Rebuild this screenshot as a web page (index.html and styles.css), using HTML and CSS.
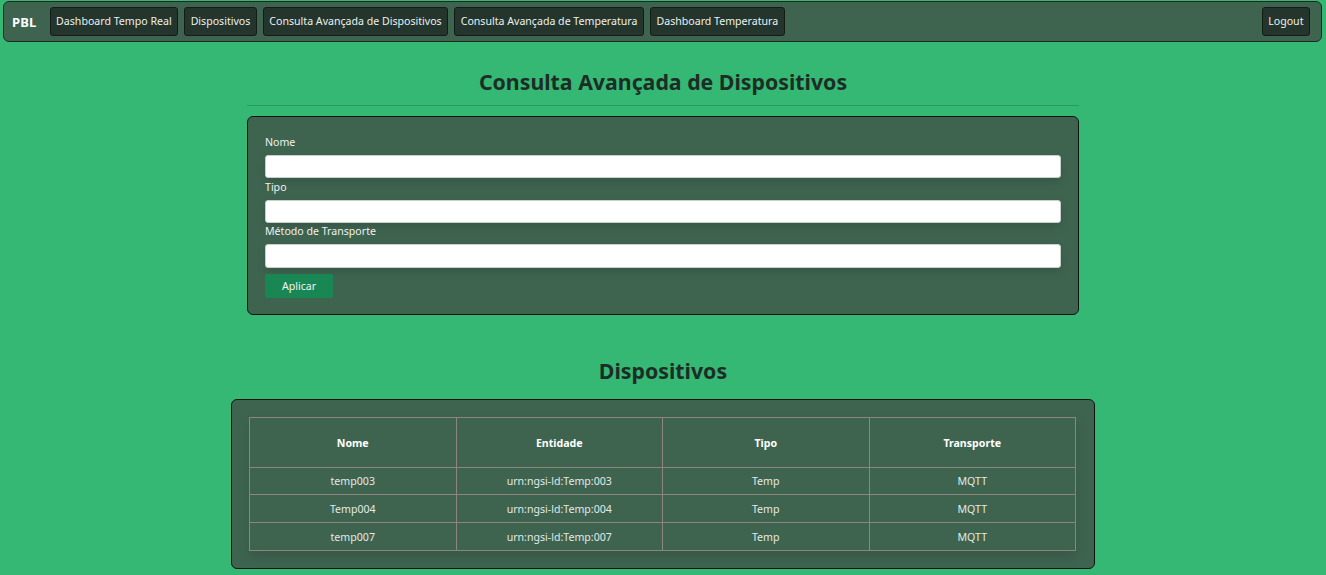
FILE: index.html
```html
<!DOCTYPE html>
<html lang="pt">
<head>
<meta charset="utf-8">
<title>Consulta Avançada de Dispositivos</title>
<link rel="stylesheet" href="styles.css">
</head>
<body>
<nav class="navbar">
  <span class="brand">PBL</span>
  <div class="nav-links">
    <a class="nav-btn" href="#">Dashboard Tempo Real</a>
    <a class="nav-btn" href="#">Dispositivos</a>
    <a class="nav-btn" href="#">Consulta Avançada de Dispositivos</a>
    <a class="nav-btn" href="#">Consulta Avançada de Temperatura</a>
    <a class="nav-btn" href="#">Dashboard Temperatura</a>
  </div>
  <a class="nav-btn logout" href="#">Logout</a>
</nav>

<main class="page">
  <section class="query">
    <h1 class="title">Consulta Avançada de Dispositivos</h1>
    <hr class="divider">
    <form class="card form-card">
      <label class="field-label" for="nome">Nome</label>
      <input class="field-input" id="nome" type="text">
      <label class="field-label" for="tipo">Tipo</label>
      <input class="field-input" id="tipo" type="text">
      <label class="field-label" for="transp">Método de Transporte</label>
      <input class="field-input" id="transp" type="text">
      <button class="apply-btn" type="button">Aplicar</button>
    </form>
  </section>

  <section class="results">
    <h2 class="subtitle">Dispositivos</h2>
    <div class="card table-card">
      <table class="devices">
        <thead>
          <tr><th>Nome</th><th>Entidade</th><th>Tipo</th><th>Transporte</th></tr>
        </thead>
        <tbody>
          <tr><td>temp003</td><td>urn:ngsi-ld:Temp:003</td><td>Temp</td><td>MQTT</td></tr>
          <tr><td>Temp004</td><td>urn:ngsi-ld:Temp:004</td><td>Temp</td><td>MQTT</td></tr>
          <tr><td>temp007</td><td>urn:ngsi-ld:Temp:007</td><td>Temp</td><td>MQTT</td></tr>
        </tbody>
      </table>
    </div>
  </section>
</main>
</body>
</html>
```

FILE: styles.css
```css
* { box-sizing: border-box; }

html, body {
  margin: 0;
  padding: 0;
}

body {
  background: #35b874;
  font-family: "Noto Sans", "Open Sans", sans-serif;
  color: #e9ecea;
  height: 575px;
  overflow: hidden;
}

.navbar {
  margin: 1px 4px 0 3px;
  height: 41px;
  background: #3e6450;
  border: 1px solid #1d2b24;
  border-radius: 6px;
  display: flex;
  align-items: center;
  padding: 0 11px 0 8px;
}

.brand {
  font-weight: 700;
  font-size: 13px;
  color: #ffffff;
  margin-right: 13px;
  letter-spacing: 0.2px;
}

.nav-links {
  display: flex;
  gap: 6px;
  flex: 1;
}

.nav-btn {
  display: inline-flex;
  align-items: center;
  height: 29px;
  margin-top: -1px;
  padding: 0 5.5px;
  background: #23352c;
  border: 1px solid #141c18;
  border-radius: 3px;
  color: #eef1ef;
  font-size: 10.6px;
  text-decoration: none;
  white-space: nowrap;
}

.page {
  display: flex;
  flex-direction: column;
  align-items: center;
}

.query {
  width: 832px;
}

.title {
  margin: 25px 0 0;
  text-align: center;
  font-size: 21.3px;
  line-height: 30px;
  font-weight: 700;
  color: #1d2d26;
}

.divider {
  margin: 8px 0 10px;
  border: 0;
  border-top: 1px solid #2a9a60;
  height: 0;
}

.card {
  background: #3e6450;
  border: 1px solid #0e1511;
  border-radius: 6px;
  padding: 17px;
}

.form-card {
  display: flex;
  flex-direction: column;
  padding-bottom: 16px;
}

.field-label {
  font-size: 10.6px;
  line-height: 16px;
  margin-bottom: 5px;
  color: #eef1ef;
}

.field-input {
  height: 23px;
  margin: 0;
  border: 1px solid #c9cfcb;
  border-radius: 3px;
  background: #ffffff;
  box-shadow: 0 4px 10px rgba(0, 0, 0, 0.12);
  font-family: inherit;
}

.field-input:first-of-type {
  margin-bottom: 1px;
}

.field-input:last-of-type {
  height: 24px;
}

.apply-btn {
  align-self: flex-start;
  margin-top: 6px;
  width: 68px;
  height: 24px;
  background: #198754;
  border: 0;
  border-radius: 2px;
  color: #f0f3f1;
  font-family: inherit;
  font-size: 10.6px;
}

.results {
  width: 864px;
}

.subtitle {
  margin: 41px 0 0;
  text-align: center;
  font-size: 21.3px;
  line-height: 30px;
  font-weight: 700;
  color: #1d2d26;
}

.table-card {
  margin-top: 13px;
  padding: 17px 18px 17px 17px;
}

.devices {
  width: 100%;
  border-collapse: collapse;
  table-layout: fixed;
  font-size: 10.6px;
  box-shadow: 0 6px 12px rgba(0, 0, 0, 0.12);
}

.devices th,
.devices td {
  border: 1px solid #8c8580;
  text-align: center;
  padding: 0;
}

.devices th {
  height: 50px;
  font-weight: 700;
  color: #ffffff;
}

.devices td {
  height: 28px;
  color: #e4e8e5;
}

.devices tbody tr:first-child td {
  height: 27px;
}
```
